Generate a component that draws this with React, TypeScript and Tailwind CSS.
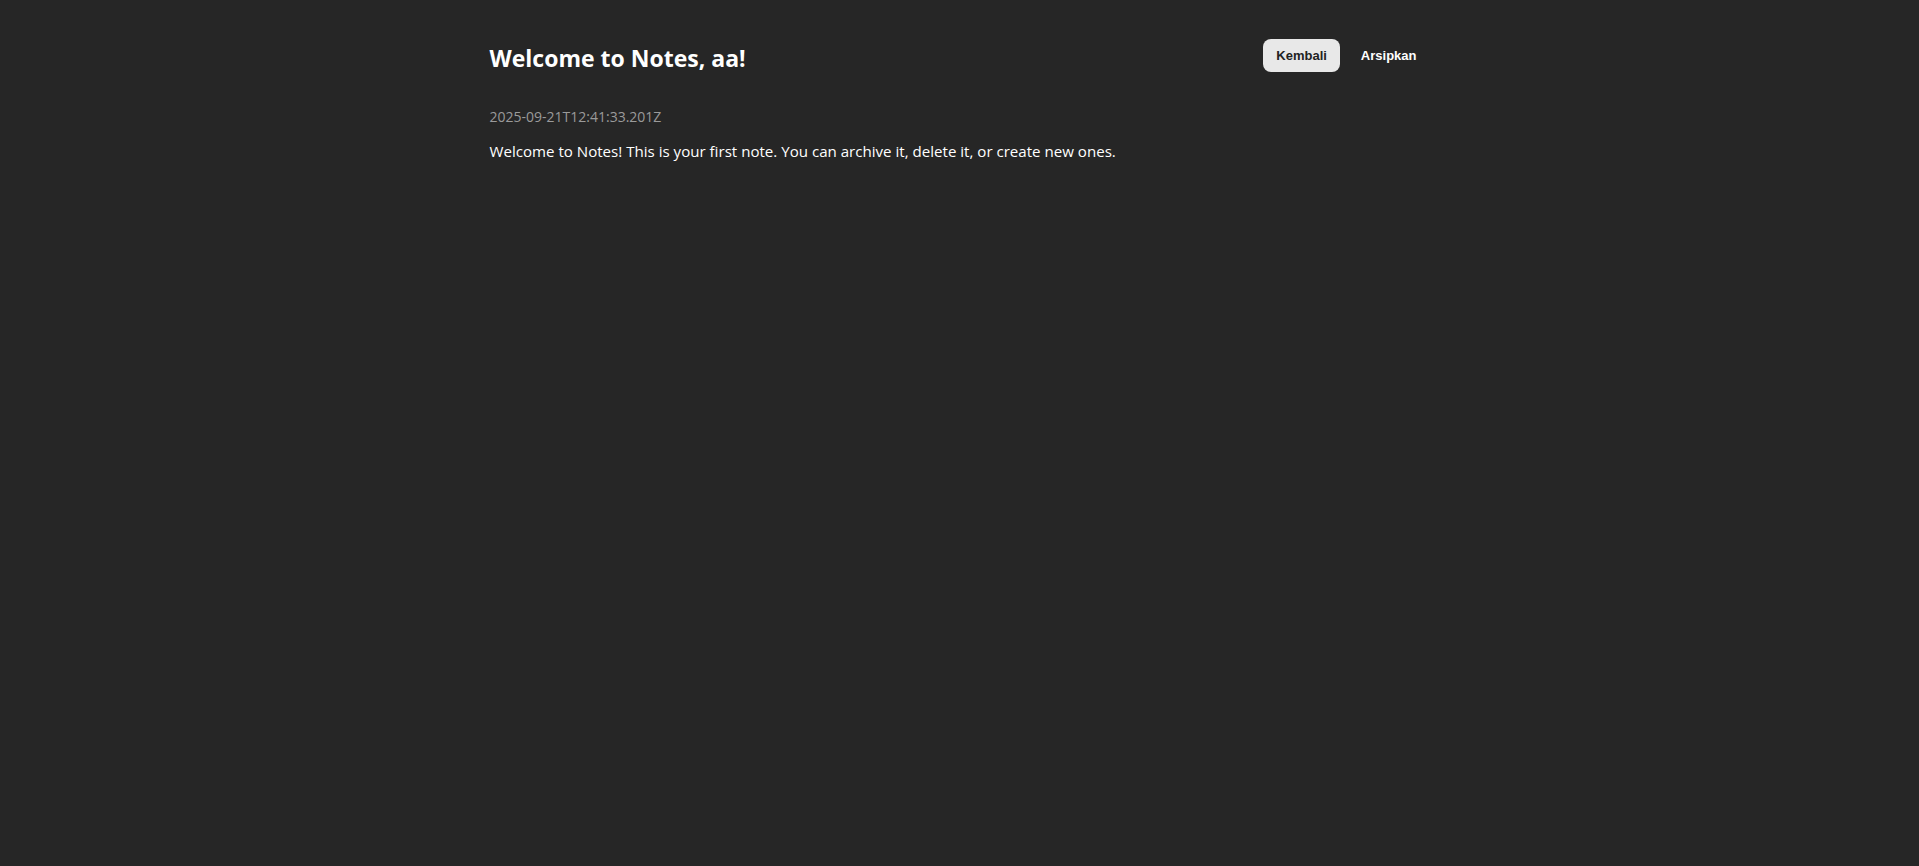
export default function App() {
  return (
    <main className="min-h-screen bg-[#262626] text-white font-['Open_Sans',sans-serif]">
      <div className="mx-auto w-[940px] pt-[39px]">
        {/* Header */}
        <header className="flex items-center justify-between">
          <h1 className="text-[23px] font-bold leading-[36px]">Welcome to Notes, aa!</h1>
          <div className="mb-1 flex items-center gap-2 font-['Liberation_Sans',Arial,sans-serif] text-[13px] font-bold">
            <button className="h-[33px] rounded-lg bg-[#e8e8e8] px-[13px] text-[#222]">Kembali</button>
            <button className="h-[33px] rounded-lg px-[13px] text-white">Arsipkan</button>
          </div>
        </header>

        {/* Note */}
        <p className="mt-[31px] text-[14px] leading-5 text-[#9a9a9a]">2025-09-21T12:41:33.201Z</p>
        <p className="mt-[12px] text-[15.1px] leading-6">
          Welcome to Notes! This is your first note. You can archive it, delete it, or create new ones.
        </p>
      </div>
    </main>
  )
}
